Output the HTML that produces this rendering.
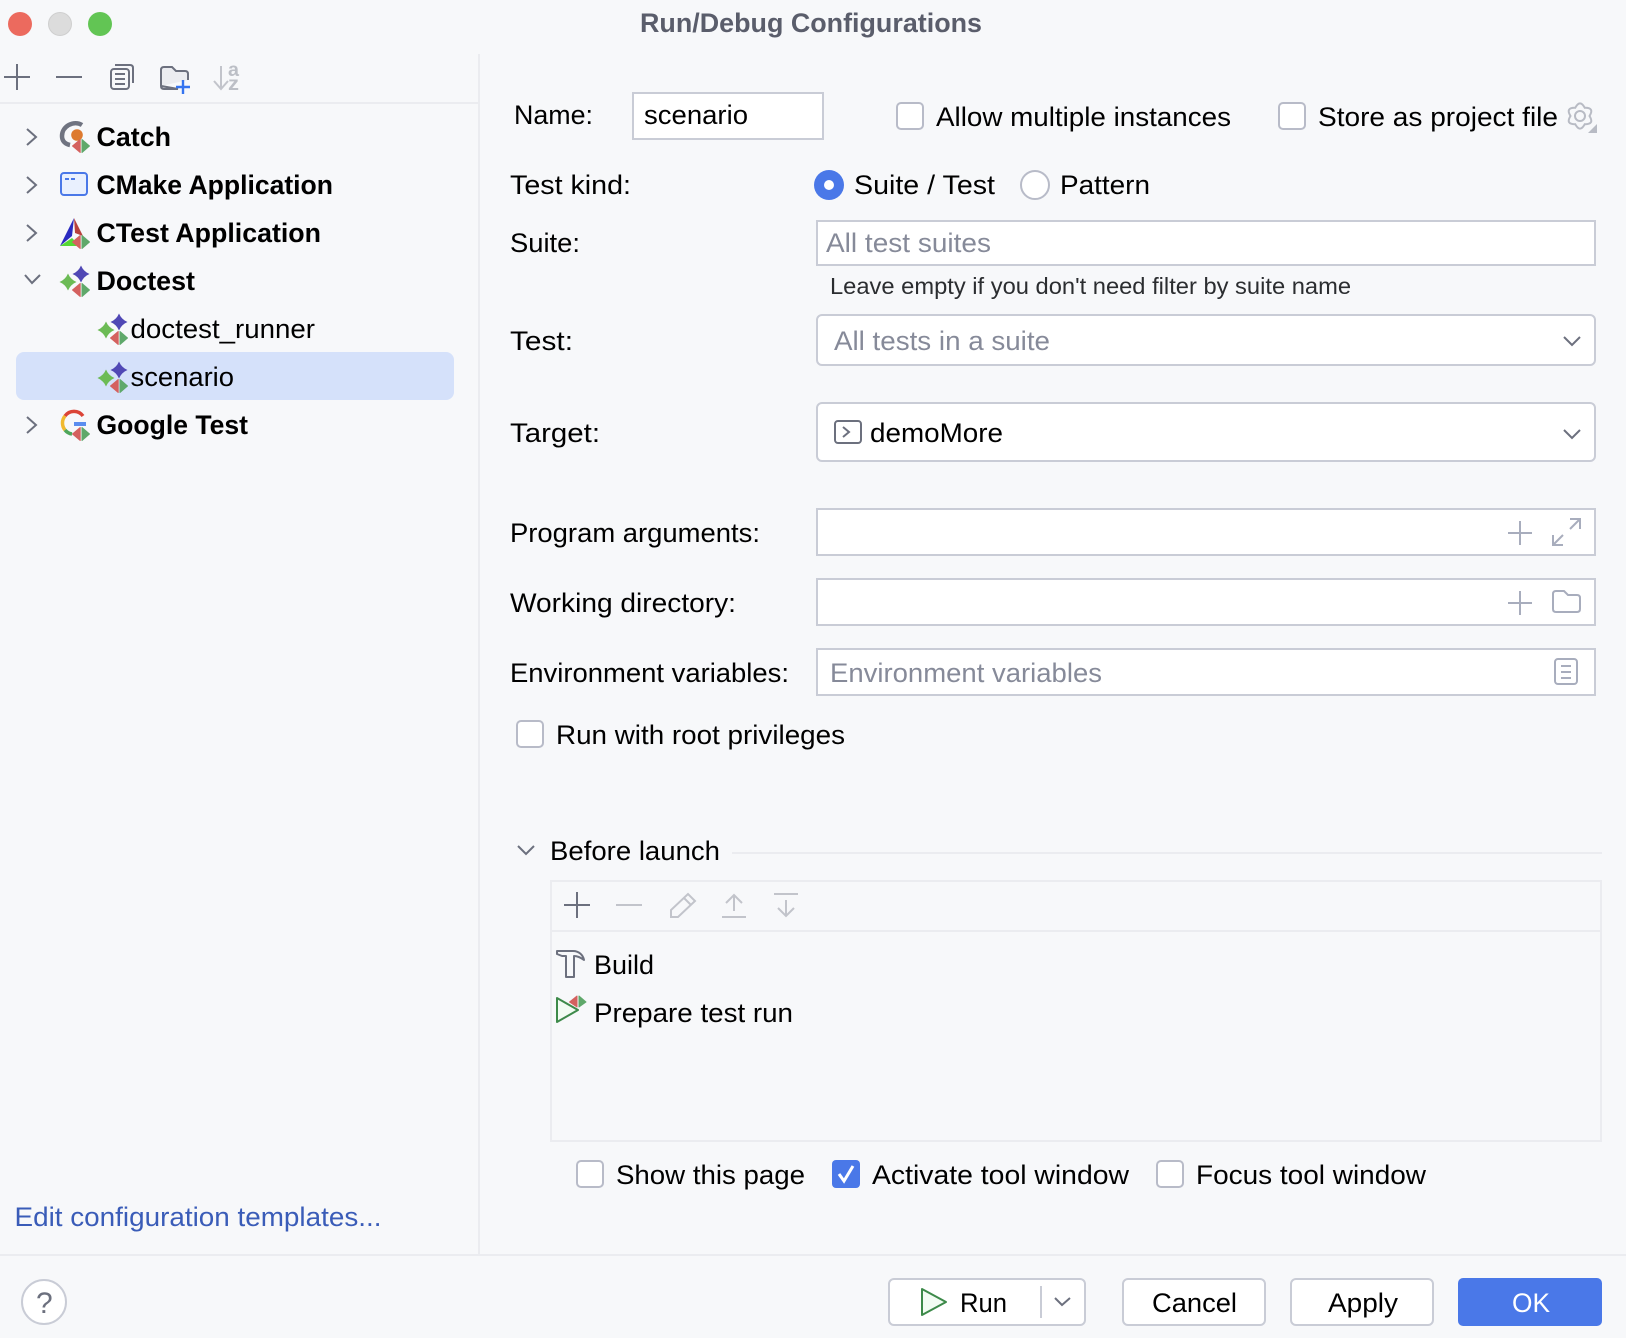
<!DOCTYPE html>
<html><head><meta charset="utf-8"><title>Run/Debug Configurations</title>
<style>
html,body{margin:0;padding:0;background:#f7f8fa;width:1626px;height:1338px;overflow:hidden}
svg{display:block}
text{font-family:"Liberation Sans",Arial,sans-serif;font-size:27px;fill:#000}
.b{font-weight:700}
.ph{fill:#868a99}
.f{fill:#fff;stroke:#c9ccd6;stroke-width:2}
.cb{fill:#fff;stroke:#b8bbc8;stroke-width:2}
.ic{fill:none;stroke:#6c707e;stroke-width:2}
.dis{fill:none;stroke:#c2c4cb;stroke-width:2}
.lt{fill:none;stroke:#a8adbd;stroke-width:2}
.sep{fill:#ebecf0}
</style></head><body>
<svg width="1626" height="1338" viewBox="0 0 1626 1338" xmlns="http://www.w3.org/2000/svg">
<defs>
<g id="mark"><path d="M-.8-6.500V6.500L-8.500 0Z" fill="#d4615f" stroke="#d4615f" stroke-linejoin="round"/><path d="M1-6.500V6.500L8.500 0Z" fill="#5fa86a" stroke="#5fa86a" stroke-linejoin="round"/></g>
<g id="doc">
<path d="M13-16.500Q15.500-10.500 21.500-8 15.500-5.500 13 .5 10.500-5.500 4.500-8 10.500-10.500 13-16.500Z" fill="#5048b5"/>
<path d="M0-8.500Q2.500-2.500 8.500 0 2.500 2.500 0 8.500-2.500 2.500-8.500 0-2.500-2.500 0-8.500Z" fill="#6cbb55"/>
<use href="#mark" x="13" y="8"/>
</g>
</defs>
<rect width="1626" height="1338" fill="#f7f8fa"/>

<!-- title bar -->
<circle cx="20" cy="24" r="12" fill="#ec6a5e"/>
<circle cx="60" cy="24" r="11.5" fill="#dcdcdc" stroke="#cfcfcf"/>
<circle cx="100" cy="24" r="12" fill="#62c554"/>
<text class="b" x="640" y="32" textLength="342" lengthAdjust="spacingAndGlyphs" style="fill:#5a5d6b">Run/Debug Configurations</text>

<!-- separators -->
<rect x="478" y="54" width="2" height="1201" class="sep"/>
<rect x="0" y="102" width="478" height="2" class="sep"/>
<rect x="0" y="1254" width="1626" height="2" class="sep"/>

<!-- left toolbar -->
<path d="M4 77H30M17 64V90" class="ic"/>
<path d="M56 77H82" class="ic"/>
<rect x="111" y="69" width="18" height="20" rx="3" class="ic"/>
<path d="M115 65H130Q133 65 133 68V83M115 74H125M115 79H125M115 84H125" class="ic"/>
<path d="M161 86V70Q161 67 164 67H172L176 71H185Q188 71 188 74V80M178 89H164Q161 89 161 86Z" fill="#ebecf0" stroke="#6c707e" stroke-width="2"/>
<path d="M183 80V94M176 87H190" fill="none" stroke="#3574f0" stroke-width="2.4"/>
<path d="M221 66V89M214 81L221 89 228 81" class="dis"/>
<text x="228" y="76" style="font-size:19px;fill:#bcbfc6;font-weight:700" textLength="11" lengthAdjust="spacingAndGlyphs">a</text>
<text x="228" y="90" style="font-size:19px;fill:#bcbfc6;font-weight:700" textLength="11" lengthAdjust="spacingAndGlyphs">z</text>

<!-- tree -->
<rect x="16" y="352" width="438" height="48" rx="8" fill="#d5e1fa"/>
<path d="M27 129L36 137 27 145" class="ic"/>
<path d="M27 177L36 185 27 193" class="ic"/>
<path d="M27 225L36 233 27 241" class="ic"/>
<path d="M25 275L32 283 40 275" class="ic"/>
<path d="M27 417L36 425 27 433" class="ic"/>

<!-- Catch -->
<path d="M82 125C74 120 62 126 62 136 62 141 65 144 70 145" fill="none" stroke="#6f7380" stroke-width="4.500"/>
<circle cx="77" cy="135" r="5.800" fill="#dd7a2f"/>
<use href="#mark" x="81" y="146"/>
<text class="b" x="96.500" y="146" textLength="74.500" lengthAdjust="spacingAndGlyphs">Catch</text>

<!-- CMake -->
<rect x="61" y="173" width="26" height="22" rx="3" fill="#e9f0fe" stroke="#4a78e8" stroke-width="2"/>
<path d="M65 179H69M71 179H75" stroke="#4a78e8" stroke-width="2"/>
<text class="b" x="96.500" y="194" textLength="236.500" lengthAdjust="spacingAndGlyphs">CMake Application</text>

<!-- CTest -->
<path d="M74 218L60 246 72 236 74 218Z" fill="#2a2ac0"/>
<path d="M74 218L83 236 75 233Z" fill="#b8413d"/>
<path d="M60 246L72 238 80 246Z" fill="#55d835"/>
<use href="#mark" x="81" y="242"/>
<text class="b" x="96.500" y="242" textLength="224.500" lengthAdjust="spacingAndGlyphs">CTest Application</text>

<!-- Doctest -->
<use href="#doc" x="68" y="282"/>
<text class="b" x="96.500" y="290" textLength="98.500" lengthAdjust="spacingAndGlyphs">Doctest</text>
<use href="#doc" x="106" y="330"/>
<text x="130.500" y="338" textLength="184.500" lengthAdjust="spacingAndGlyphs">doctest_runner</text>
<use href="#doc" x="106" y="378"/>
<text x="130.500" y="386" textLength="103.500" lengthAdjust="spacingAndGlyphs">scenario</text>

<!-- Google -->
<path d="M83 416A11 11 0 0 0 65 416" fill="none" stroke="#db4437" stroke-width="3.5"/>
<path d="M65 416A11 11 0 0 0 65 430" fill="none" stroke="#f0b92e" stroke-width="3.5"/>
<path d="M65 430A11 11 0 0 0 72 434" fill="none" stroke="#4ea65a" stroke-width="3.5"/>
<rect x="74" y="422" width="12" height="4" fill="#5b8def"/>
<use href="#mark" x="81" y="434"/>
<text class="b" x="96.500" y="434" textLength="151.500" lengthAdjust="spacingAndGlyphs">Google Test</text>

<text x="14.500" y="1226" textLength="367" lengthAdjust="spacingAndGlyphs" style="fill:#3a5cb8">Edit configuration templates...</text>

<circle cx="44" cy="1302" r="22" fill="#fff" stroke="#c9ccd6" stroke-width="2"/>
<text x="36" y="1313" style="fill:#6c707e;font-size:30px">?</text>

<!-- Form -->
<text x="514" y="124" textLength="79" lengthAdjust="spacingAndGlyphs">Name:</text>
<rect x="633" y="93" width="190" height="46" class="f"/>
<text x="644" y="124" textLength="104" lengthAdjust="spacingAndGlyphs">scenario</text>

<rect x="897" y="103" width="26" height="26" rx="4" class="cb"/>
<text x="936" y="126" textLength="295" lengthAdjust="spacingAndGlyphs">Allow multiple instances</text>
<rect x="1279" y="103" width="26" height="26" rx="4" class="cb"/>
<text x="1318" y="126" textLength="240" lengthAdjust="spacingAndGlyphs">Store as project file</text>
<g fill="none" stroke="#b8bbc4" stroke-width="2">
<path d="M1584.750 107.800Q1594.700 107.500 1589.500 116 1594.700 124.500 1584.750 124.200 1580 133 1575.250 124.200 1565.300 124.500 1570.500 116 1565.300 107.500 1575.250 107.800 1580 99 1584.750 107.800Z"/>
<circle cx="1580" cy="116" r="5"/>
</g>
<path d="M1588 133L1597 133 1597 124Z" fill="#b8bbc4"/>

<text x="510" y="194" textLength="121" lengthAdjust="spacingAndGlyphs">Test kind:</text>
<circle cx="829" cy="185" r="15" fill="#4a78e8"/>
<circle cx="829" cy="185" r="5" fill="#fff"/>
<text x="854" y="194" textLength="141" lengthAdjust="spacingAndGlyphs">Suite / Test</text>
<circle cx="1035" cy="185" r="14" class="cb"/>
<text x="1060" y="194" textLength="90" lengthAdjust="spacingAndGlyphs">Pattern</text>

<text x="510" y="252" textLength="70" lengthAdjust="spacingAndGlyphs">Suite:</text>
<rect x="817" y="221" width="778" height="44" class="f"/>
<text class="ph" x="826" y="252" textLength="165" lengthAdjust="spacingAndGlyphs">All test suites</text>
<text x="830" y="294" textLength="521" lengthAdjust="spacingAndGlyphs" style="font-size:23px;fill:#2b2d30">Leave empty if you don't need filter by suite name</text>

<text x="510" y="350" textLength="63" lengthAdjust="spacingAndGlyphs">Test:</text>
<rect x="817" y="315" width="778" height="50" rx="5" class="f"/>
<text class="ph" x="834" y="350" textLength="216" lengthAdjust="spacingAndGlyphs">All tests in a suite</text>
<path d="M1564 337L1572 345 1580 337" class="ic"/>

<text x="510" y="442" textLength="90" lengthAdjust="spacingAndGlyphs">Target:</text>
<rect x="817" y="403" width="778" height="58" rx="5" class="f"/>
<rect x="835" y="421" width="26" height="22" rx="3" class="ic" fill="#f7f8fa"/>
<path d="M843 427L849 432 843 437" class="ic"/>
<text x="870" y="442" textLength="133" lengthAdjust="spacingAndGlyphs">demoMore</text>
<path d="M1564 430L1572 438 1580 430" class="ic"/>

<text x="510" y="542" textLength="250" lengthAdjust="spacingAndGlyphs">Program arguments:</text>
<rect x="817" y="509" width="778" height="46" class="f"/>
<path d="M1508 533H1532M1520 521V545" class="lt"/>
<path d="M1553 545L1563 535M1553 535V545H1563M1580 519L1570 529M1570 519H1580V529" class="lt"/>

<text x="510" y="612" textLength="226" lengthAdjust="spacingAndGlyphs">Working directory:</text>
<rect x="817" y="579" width="778" height="46" class="f"/>
<path d="M1508 603H1532M1520 591V615" class="lt"/>
<path d="M1553 609V594Q1553 591 1556 591H1564L1568 595H1577Q1580 595 1580 598V609Q1580 612 1577 612H1556Q1553 612 1553 609Z" class="lt"/>

<text x="510" y="682" textLength="279" lengthAdjust="spacingAndGlyphs">Environment variables:</text>
<rect x="817" y="649" width="778" height="46" class="f"/>
<text class="ph" x="830" y="682" textLength="272" lengthAdjust="spacingAndGlyphs">Environment variables</text>
<rect x="1555" y="659" width="22" height="25" rx="3" class="lt"/>
<path d="M1561 666H1571M1561 672H1571M1561 678H1571" class="lt"/>

<rect x="517" y="721" width="26" height="26" rx="4" class="cb"/>
<text x="556" y="744" textLength="289" lengthAdjust="spacingAndGlyphs">Run with root privileges</text>

<!-- Before launch -->
<path d="M518 846L526 854 534 846" class="ic"/>
<text x="550" y="860" textLength="170" lengthAdjust="spacingAndGlyphs">Before launch</text>
<rect x="732" y="852" width="870" height="2" class="sep"/>
<rect x="551" y="881" width="1050" height="260" fill="none" stroke="#ebecf0" stroke-width="2"/>
<rect x="551" y="930" width="1050" height="2" class="sep"/>
<path d="M564 905H590M577 892V918" class="ic"/>
<path d="M616 905H642" class="dis"/>
<path d="M671 917V910L688 894 695 901 678 917ZM684 898L691 905" class="dis"/>
<path d="M722 917H746M734 911V895M726 903L734 895 742 903" class="dis"/>
<path d="M774 894H798M786 900V916M778 908L786 916 794 908" class="dis"/>

<path d="M557 951H573C579 951 583 955 584 960 580 957 577 956 574 956V977H566V956H562L557 954Z" class="ic" stroke-linejoin="round"/>
<text x="594" y="974" textLength="60" lengthAdjust="spacingAndGlyphs">Build</text>

<path d="M557 998L578 1010 557 1022Z" fill="#f2fcf3" stroke="#3d8a4a" stroke-width="2" stroke-linejoin="round"/>
<path d="M577 996V1007L569.500 1002Z" fill="#d4615f" stroke="#d4615f" stroke-linejoin="round"/><path d="M579 996L586 1002 579 1007Z" fill="#5fa86a" stroke="#5fa86a" stroke-linejoin="round"/>
<text x="594" y="1022" textLength="199" lengthAdjust="spacingAndGlyphs">Prepare test run</text>

<!-- bottom checks -->
<rect x="577" y="1161" width="26" height="26" rx="4" class="cb"/>
<text x="616" y="1184" textLength="189" lengthAdjust="spacingAndGlyphs">Show this page</text>
<rect x="832" y="1160" width="28" height="28" rx="4" fill="#4a78e8"/>
<path d="M839 1174L844 1181 853 1166" fill="none" stroke="#fff" stroke-width="3"/>
<text x="872" y="1184" textLength="257" lengthAdjust="spacingAndGlyphs">Activate tool window</text>
<rect x="1157" y="1161" width="26" height="26" rx="4" class="cb"/>
<text x="1196" y="1184" textLength="230" lengthAdjust="spacingAndGlyphs">Focus tool window</text>

<!-- footer buttons -->
<rect x="889" y="1279" width="196" height="46" rx="5" class="f"/>
<path d="M922 1289L946 1302 922 1315Z" fill="#f2fcf3" stroke="#3d8a4a" stroke-width="2" stroke-linejoin="round"/>
<text x="960" y="1312" textLength="47" lengthAdjust="spacingAndGlyphs">Run</text>
<rect x="1040" y="1286" width="2" height="32" fill="#c9ccd6"/>
<path d="M1055 1298L1062 1305 1070 1298" class="ic"/>
<rect x="1123" y="1279" width="142" height="46" rx="5" class="f"/>
<text x="1152" y="1312" textLength="85" lengthAdjust="spacingAndGlyphs">Cancel</text>
<rect x="1291" y="1279" width="142" height="46" rx="5" class="f"/>
<text x="1328" y="1312" textLength="70" lengthAdjust="spacingAndGlyphs">Apply</text>
<rect x="1458" y="1278" width="144" height="48" rx="5" fill="#4a78e8"/>
<text x="1512" y="1312" textLength="38" lengthAdjust="spacingAndGlyphs" style="fill:#fff">OK</text>
</svg>
</body></html>
